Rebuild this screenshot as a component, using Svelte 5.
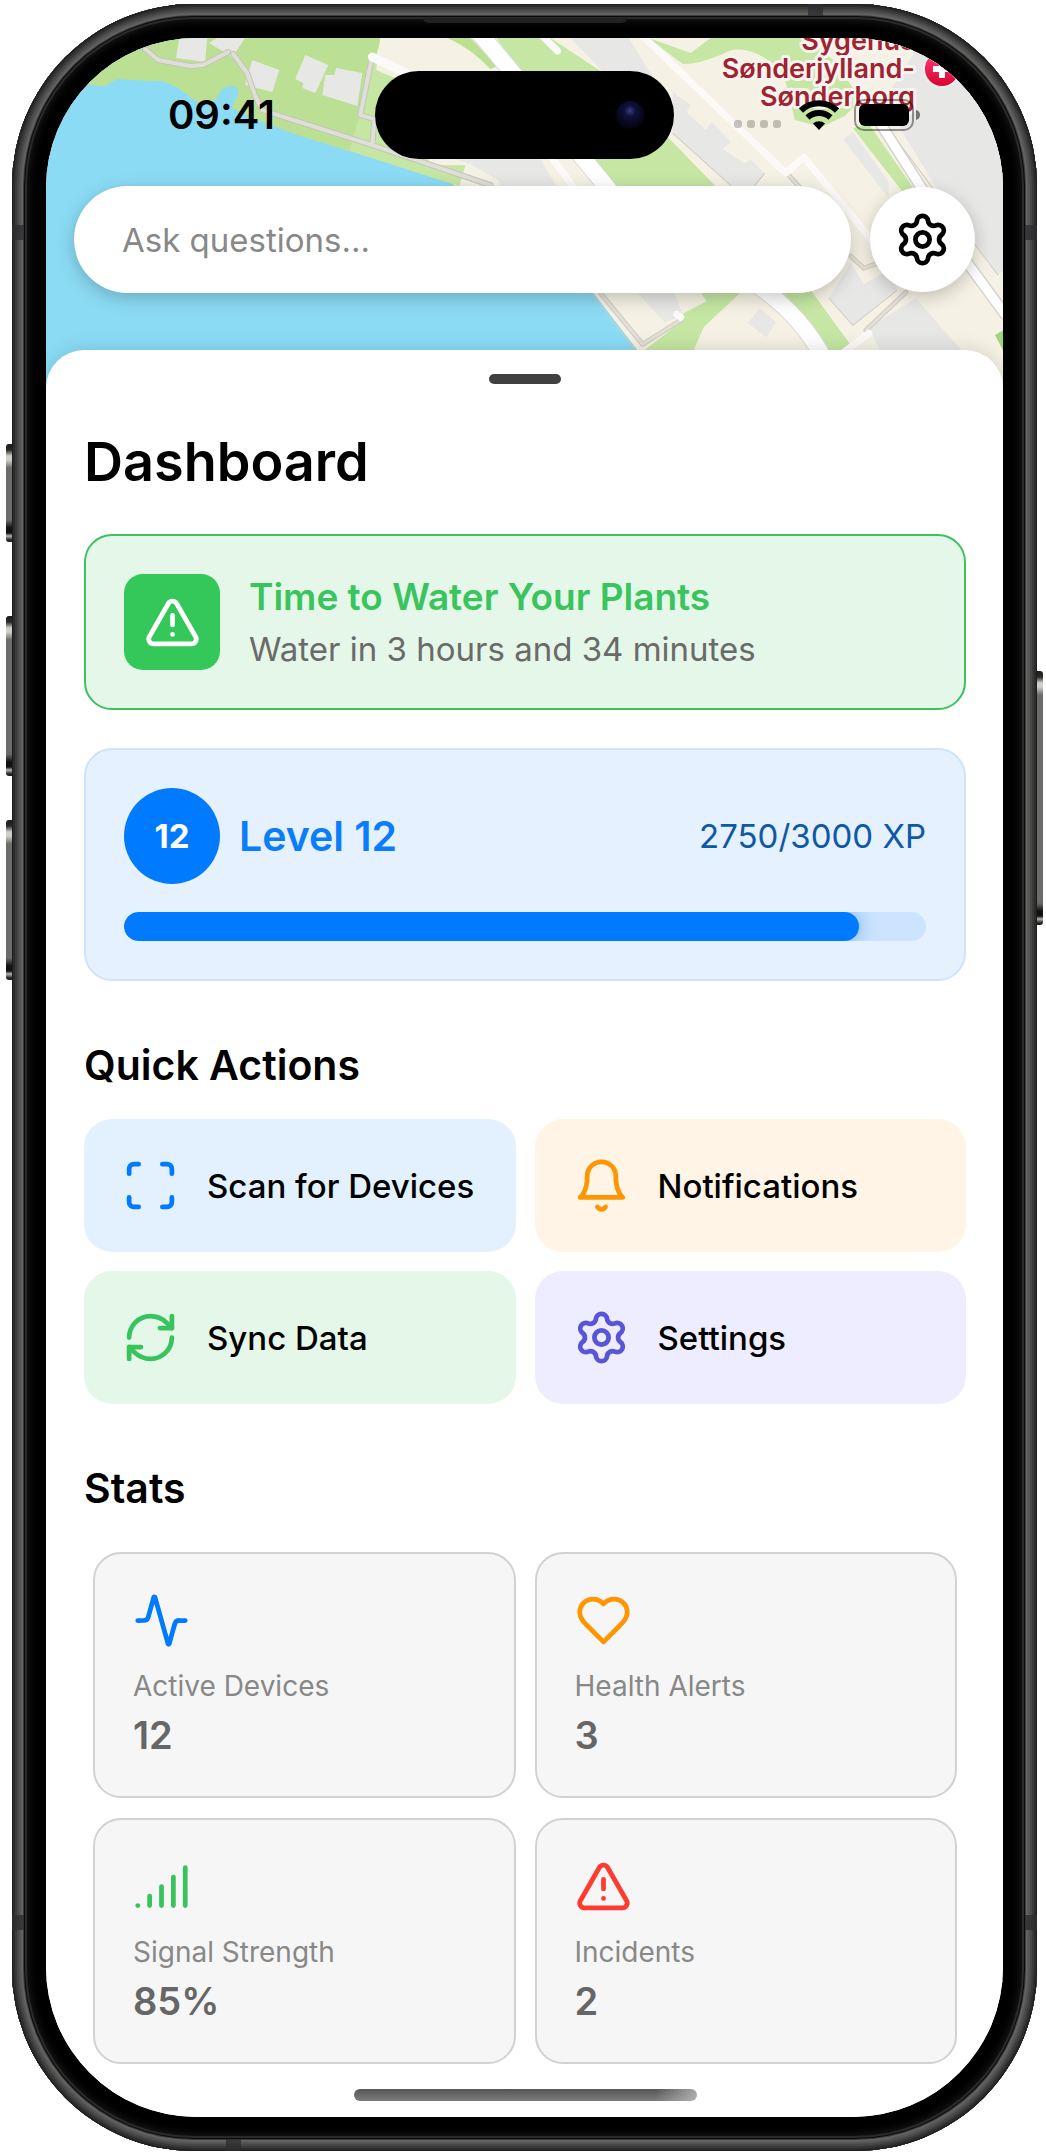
<script>
  const xp = 2750;
  const xpMax = 3000;

  const icons = {
    settings: [
      'M9.671 4.136a2.34 2.34 0 0 1 4.659 0 2.34 2.34 0 0 0 3.319 1.915 2.34 2.34 0 0 1 2.33 4.033 2.34 2.34 0 0 0 0 3.831 2.34 2.34 0 0 1-2.33 4.033 2.34 2.34 0 0 0-3.319 1.915 2.34 2.34 0 0 1-4.659 0 2.34 2.34 0 0 0-3.32-1.915 2.34 2.34 0 0 1-2.33-4.033 2.34 2.34 0 0 0 0-3.831A2.34 2.34 0 0 1 6.35 6.051a2.34 2.34 0 0 0 3.319-1.915',
      'M9 12a3 3 0 1 0 6 0a3 3 0 1 0-6 0'
    ],
    alert: [
      'm21.73 18-8-14a2 2 0 0 0-3.48 0l-8 14A2 2 0 0 0 4 21h16a2 2 0 0 0 1.73-3',
      'M12 9v4',
      'M12 17h.01'
    ],
    scan: [
      'M3 7V5a2 2 0 0 1 2-2h2',
      'M17 3h2a2 2 0 0 1 2 2v2',
      'M21 17v2a2 2 0 0 1-2 2h-2',
      'M7 21H5a2 2 0 0 1-2-2v-2'
    ],
    bell: [
      'M6 8a6 6 0 0 1 12 0c0 7 3 9 3 9H3s3-2 3-9',
      'M10.3 21a1.94 1.94 0 0 0 3.4 0'
    ],
    sync: [
      'M3 12a9 9 0 0 1 9-9 9.75 9.75 0 0 1 6.74 2.74L21 8',
      'M21 3v5h-5',
      'M21 12a9 9 0 0 1-9 9 9.75 9.75 0 0 1-6.74-2.74L3 16',
      'M8 16H3v5'
    ],
    activity: [
      'M22 12h-2.48a2 2 0 0 0-1.93 1.46l-2.35 8.36a.25.25 0 0 1-.48 0L9.24 2.18a.25.25 0 0 0-.48 0l-2.35 8.36A2 2 0 0 1 4.49 12H2'
    ],
    heart: [
      'M19 14c1.49-1.46 3-3.21 3-5.5A5.5 5.5 0 0 0 16.5 3c-1.76 0-3 .5-4.5 2-1.5-1.5-2.74-2-4.5-2A5.5 5.5 0 0 0 2 8.5c0 2.3 1.5 4.05 3 5.5l7 7Z'
    ],
    signal: ['M2 20h.01', 'M7 20v-4', 'M12 20v-8', 'M17 20V8', 'M22 4v16']
  };

  const actions = [
    { label: 'Scan for Devices', icon: 'scan', tone: 'blue' },
    { label: 'Notifications', icon: 'bell', tone: 'orange' },
    { label: 'Sync Data', icon: 'sync', tone: 'green' },
    { label: 'Settings', icon: 'settings', tone: 'purple' }
  ];

  const stats = [
    { label: 'Active Devices', value: '12', icon: 'activity', tone: 'blue' },
    { label: 'Health Alerts', value: '3', icon: 'heart', tone: 'orange' },
    { label: 'Signal Strength', value: '85%', icon: 'signal', tone: 'green' },
    { label: 'Incidents', value: '2', icon: 'alert', tone: 'red' }
  ];
</script>

{#snippet icon(name)}
  <svg class="icon" viewBox="0 0 24 24" aria-hidden="true">
    {#each icons[name] as d}
      <path {d} />
    {/each}
  </svg>
{/snippet}

<div class="page">
  <div class="phone">
    <span class="key key-action"></span>
    <span class="key key-up"></span>
    <span class="key key-down"></span>
    <span class="key key-power"></span>
    <span class="speaker"></span>
    <span class="band band-top"></span>
    <span class="band band-bottom"></span>
    <span class="band band-side band-left band-high"></span>
    <span class="band band-side band-right band-high"></span>
    <span class="band band-side band-left band-low"></span>
    <span class="band band-side band-right band-low"></span>

    <div class="screen">
      <svg class="map" viewBox="46 38 956 352" preserveAspectRatio="xMidYMin slice" aria-hidden="true">
        <defs>
          <linearGradient id="pin" x1="0" y1="0" x2="0" y2="1">
            <stop offset="0" stop-color="#ff3b76" />
            <stop offset="1" stop-color="#d8062f" />
          </linearGradient>
        </defs>
        <rect x="46" y="38" width="956" height="352" fill="#8bdbf5" />
        <path fill="#f5f1e4" d="M376 38H1002V390H668L593 293L455 186L376 120Z" />

        <!-- parks and shore -->
        <path fill="#c5e7a3" d="M376 38L376 70L400 80L430 165L465 165L459 186L340 148Z" />
        <path fill="#bbe094" d="M46 38H380V41L349 151L300 136L262 122L232 108L235 100Q240 92 237 88Q230 84 222 89Q216 98 213 104H200L190 97L178 88L162 81H150L117 79L105 86L88 85L46 78Z" />
        <path fill="#f5f1e4" d="M380 38H442L492 70L440 78H395L376 70Z" />
        <path fill="#bbe094" d="M447 38H470L497 66L490 69Q470 48 447 38Z" />
        <path fill="#c5e7a3" d="M496 38H550L606 75L668 138L715 186H613L540 100Z" />
        <path fill="#c5e7a3" d="M648 38L690 53L710 38H805L835 62L860 100L844 116L821 127L794 120L785 82L770 62Q742 42 722 54Q700 64 682 64Z" />
        <path fill="#c5e7a3" d="M852 128L868 124L914 190L902 192Z" />
        <path fill="#c5e7a3" d="M706 292H740L703 327L692 352H641L680 322L683 313L706 301L700 292Z" />
        <path fill="#c5e7a3" d="M780 290H810L850 345L842 352H823Q805 315 780 290Z" />
        <path fill="#9fd67c" d="M1002 330L994 335L1002 350Z" />

        <!-- buildings and paved areas -->
        <g fill="#e7e7e6">
          <path d="M179 38H207L205 62L176 58Z" />
          <path d="M217 38H245L232 57L209 43Z" />
          <path d="M252 60L279 70L272 92L245 85Z" />
          <path d="M305 55L328 65L315 93L302 88L303 83L295 79Z" />
          <path d="M325 75H334L336 68L362 73L357 106L322 95Z" />
          <path d="M455 159H540L556 186H500L498 180L470 164Z" />
          <path d="M570 38H628L644 64L652 76H606Z" />
          <path d="M672 92L690 105L686 112L705 130L711 122L730 142L722 149L744 163L750 159L764 173L752 188H733L672 133Z" />
          <path d="M842 139L852 132L888 182V198Z" />
          <path d="M900 130L890 90L915 50H1002V270L997 275L937 190Z" />
          <path d="M828 298L850 262L863 284L888 270L896 288L852 325Z" />
          <path d="M868 327L915 298L962 352H880Z" />
          <path d="M759 308L775 322L766 337L747 323Z" />
          <path d="M637 293H674L682 315L664 322Z" />
        </g>
        <g fill="none" stroke="#cfcdc6" stroke-width="1">
          <path d="M672 133L733 188M764 173L752 188" />
          <path d="M828 298L852 325L896 290M590 293L637 352" />
          <path d="M890 132L997 275" />
        </g>

        <!-- roads -->
        <g fill="none" stroke-linejoin="round" stroke-linecap="round">
          <g stroke="#c3c5b9" stroke-width="6">
            <path d="M145 49L158 60L190 66L203 65L228 52" />
            <path d="M233 54L247 73L255 96L262 110L372 145L490 185" />
            <path d="M371 60L360 115L374 119L372 145" />
          </g>
          <g stroke="#dfdfd7" stroke-width="4">
            <path d="M145 49L158 60L190 66L203 65L228 52" />
            <path d="M233 54L247 73L255 96L262 110L372 145L490 185" />
            <path d="M371 60L360 115L374 119L372 145" />
          </g>
          <g stroke="#cfccc3" stroke-width="5">
            <path d="M600 293L642 344L680 320" />
            <path d="M787 174L805 194M850 256L863 268L885 260" />
            <path d="M865 330L905 292" />
          </g>
          <g stroke="#e2dfd6" stroke-width="3">
            <path d="M600 293L642 344L680 320" />
            <path d="M787 174L805 194M850 256L863 268L885 260" />
            <path d="M865 330L905 292" />
          </g>
          <path stroke="#fbfaf8" stroke-width="9" d="M372 57L420 80" />
          <path stroke="#fbfaf8" stroke-width="7" d="M540 34L557 51" />
          <path stroke="#fbfaf8" stroke-width="7" d="M640 34L785 173L803 157L875 245" />
          <path stroke="#fbfaf8" stroke-width="7" d="M552 159Q565 175 575 190M680 317L676 314M843 352L868 333" />
          <g stroke="#dcdad4" stroke-width="18">
            <path d="M478 32L515 76" />
            <path d="M580 155L612 194" />
            <path d="M755 284Q800 314 824 360" />
          </g>
          <g stroke="#ffffff" stroke-width="16">
            <path d="M478 32L515 76" />
            <path d="M580 155L612 194" />
            <path d="M755 284Q800 314 824 360" />
          </g>
          <path stroke="#d6d4ce" stroke-width="12" d="M876 118L922 190M966 262L1004 314" />
          <path stroke="#ffffff" stroke-width="9" d="M876 118L922 190M966 262L1004 314" />
        </g>

        <g class="place">
          <text x="914" y="50">Sygehus</text>
          <text x="914" y="78">Sønderjylland-</text>
          <text x="914" y="106">Sønderborg</text>
        </g>
        <circle cx="941" cy="69" r="19" fill="#f7eef0" />
        <circle cx="941" cy="69" r="17" fill="url(#pin)" />
        <path d="M941 60V78M932 69H950" stroke="#ffffff" stroke-width="6" />
      </svg>

      <header class="status">
        <time class="clock" datetime="09:41">09:41</time>
        <div class="island"><span class="lens"></span></div>
        <div class="indicators">
          <span class="dots"><i></i><i></i><i></i><i></i></span>
          <svg class="wifi" viewBox="0 0 40 30" aria-hidden="true">
            <path d="M2 10.500a26 26 0 0 1 36 0" />
            <path d="M8.500 17.500a17 17 0 0 1 23 0" />
            <path class="wifi-dot" d="M20 30l-6-6.500a9 9 0 0 1 12 0z" />
          </svg>
          <svg class="battery" viewBox="0 0 66 32" aria-hidden="true">
            <rect class="shell" x="1" y="1" width="58" height="30" rx="9" />
            <rect x="5" y="5" width="50" height="22" rx="6" />
            <path class="nub" d="M62 11q4 1 4 5t-4 5z" />
          </svg>
        </div>
      </header>

      <div class="search-row">
        <input class="search" type="text" placeholder="Ask questions..." aria-label="Ask questions" />
        <button class="gear" type="button" aria-label="Settings">{@render icon('settings')}</button>
      </div>

      <main class="sheet">
        <div class="handle"></div>
        <h1>Dashboard</h1>

        <section class="card alert">
          <div class="alert-icon">{@render icon('alert')}</div>
          <div class="alert-text">
            <h2>Time to Water Your Plants</h2>
            <p>Water in 3 hours and 34 minutes</p>
          </div>
        </section>

        <section class="card level">
          <div class="level-head">
            <span class="badge">12</span>
            <h2>Level 12</h2>
            <span class="xp">{xp}/{xpMax} XP</span>
          </div>
          <div class="track" role="progressbar" aria-label="Experience" aria-valuenow={xp} aria-valuemin="0" aria-valuemax={xpMax}>
            <div class="fill" style="width: {(xp / xpMax) * 100}%"></div>
          </div>
        </section>

        <h2 class="heading">Quick Actions</h2>
        <div class="actions">
          {#each actions as a}
            <button class="action {a.tone}" type="button">
              {@render icon(a.icon)}
              <span>{a.label}</span>
            </button>
          {/each}
        </div>

        <h2 class="heading">Stats</h2>
        <div class="stats">
          {#each stats as s}
            <article class="stat {s.tone}">
              {@render icon(s.icon)}
              <p class="stat-label">{s.label}</p>
              <p class="stat-value">{s.value}</p>
            </article>
          {/each}
        </div>

        <div class="home"></div>
      </main>
    </div>
  </div>
</div>

<style>
  :global(body) {
    background: #ffffff;
  }

  .page {
    box-sizing: border-box;
    padding: 4px 9px 4px 12px;
    font-family: Inter, Roboto, 'Liberation Sans', sans-serif;
    color: #000000;
  }

  h1,
  h2,
  p {
    margin: 0;
  }

  button {
    border: 0;
    padding: 0;
    font: inherit;
    color: inherit;
    cursor: pointer;
  }

  .icon {
    display: block;
    flex: none;
    width: 57px;
    height: 57px;
    fill: none;
    stroke: currentColor;
    stroke-width: 2;
    stroke-linecap: round;
    stroke-linejoin: round;
  }

  /* device body */
  .phone {
    position: relative;
    padding: 34px;
    border-radius: 182px;
    background: #000000;
    box-shadow:
      inset 0 0 0 1px #1d1d1d,
      inset 0 0 0 3px #2c2c2c,
      inset 0 0 0 5px #3a3a3a,
      inset 0 0 0 7px #484848,
      inset 0 0 0 9px #555554,
      inset 0 0 0 11px #62625f,
      inset 0 0 0 12px #3c3c3c,
      inset 0 0 0 13px #0a0a0a,
      inset 0 0 0 15px #2a2a2a,
      inset 0 0 10px 16px #1c1c1c;
  }

  .key {
    position: absolute;
    left: -6px;
    width: 6px;
    border-radius: 3px 0 0 3px;
    background: linear-gradient(#1c1c1c 0, #2a2a2a 6px, #d0d0c8 12px, #d0d0c8 16px, #6b6b69 24px, #6b6b69 calc(100% - 22px), #111111 calc(100% - 14px), #111111 calc(100% - 9px), #b5b5b0 calc(100% - 6px), #222222 calc(100% - 2px));
  }

  .key-action {
    top: 440px;
    height: 98px;
  }

  .key-up {
    top: 612px;
    height: 160px;
  }

  .key-down {
    top: 816px;
    height: 160px;
  }

  .key-power {
    top: 667px;
    left: auto;
    right: -6px;
    height: 254px;
    border-radius: 0 3px 3px 0;
  }

  .speaker {
    position: absolute;
    top: 14px;
    left: 50%;
    width: 204px;
    height: 5px;
    margin-left: -102px;
    border-radius: 0 0 6px 6px;
    background: #222222;
  }

  .band {
    position: absolute;
    width: 15px;
    height: 12px;
    background: #2e2e31;
    opacity: 0.8;
  }

  .band-top {
    top: 0;
    right: 214px;
  }

  .band-bottom {
    bottom: 0;
    left: 214px;
  }

  .band-side {
    width: 12px;
    height: 15px;
  }

  .band-left {
    left: 0;
  }

  .band-right {
    right: 0;
  }

  .band-high {
    top: 221px;
  }

  .band-low {
    bottom: 221px;
  }

  .screen {
    position: relative;
    overflow: hidden;
    border-radius: 150px;
    background: #ffffff;
  }

  .map {
    position: absolute;
    top: 0;
    left: 0;
    width: 100%;
    height: 352px;
  }

  .place {
    font-size: 27px;
    font-weight: 600;
    text-anchor: end;
    fill: #9d2430;
    stroke: #f8f3ee;
    stroke-width: 6px;
    stroke-linejoin: round;
    paint-order: stroke;
  }

  /* status bar */
  .status {
    position: relative;
    display: grid;
    grid-template-columns: 1fr 299px 1fr;
    align-items: center;
    padding-top: 33px;
  }

  .clock {
    padding-left: 22px;
    text-align: center;
    font-size: 40px;
    line-height: 48px;
    font-weight: 600;
  }

  .island {
    display: flex;
    align-items: center;
    justify-content: flex-end;
    height: 88px;
    box-sizing: border-box;
    padding-right: 30px;
    border-radius: 44px;
    background: #000000;
  }

  .lens {
    width: 28px;
    height: 28px;
    border-radius: 50%;
    background: radial-gradient(circle at 50% 35%, #3a3f80 0, #10113c 24%, #090925 50%, #040410 75%, #000000 100%);
  }

  .indicators {
    display: flex;
    align-items: center;
    justify-content: center;
    padding-right: 24px;
  }

  .dots {
    display: flex;
    gap: 5px;
    align-self: flex-end;
    margin: 0 18px 3px 0;
  }

  .dots i {
    width: 8px;
    height: 8px;
    border-radius: 3px;
    background: rgba(0, 0, 0, 0.22);
  }

  .wifi {
    width: 40px;
    height: 30px;
    margin-right: 15px;
    fill: none;
    stroke: #000000;
    stroke-width: 6;
  }

  .wifi-dot {
    fill: #000000;
    stroke: none;
  }

  .battery {
    width: 66px;
    height: 32px;
  }

  .shell {
    fill: none;
    stroke: rgba(0, 0, 0, 0.4);
    stroke-width: 2;
  }

  .nub {
    fill: rgba(0, 0, 0, 0.5);
  }

  /* search */
  .search-row {
    position: relative;
    display: flex;
    align-items: center;
    gap: 19px;
    padding: 27px 28px 57px;
  }

  .search {
    flex: 1;
    min-width: 0;
    height: 107px;
    box-sizing: border-box;
    padding: 0 48px;
    border: 0;
    border-radius: 54px;
    background: #ffffff;
    box-shadow: 0 5px 18px rgba(0, 0, 0, 0.22);
    font-family: inherit;
    font-size: 33px;
    color: #000000;
  }

  .search::placeholder {
    color: #888888;
    opacity: 1;
  }

  .gear {
    display: grid;
    place-items: center;
    flex: none;
    width: 105px;
    height: 105px;
    border-radius: 50%;
    background: #ffffff;
    box-shadow: 0 5px 18px rgba(0, 0, 0, 0.22);
  }

  /* sheet */
  .sheet {
    position: relative;
    padding: 24px 37px 16px 38px;
    border-radius: 38px 38px 0 0;
    background: #ffffff;
    box-shadow: 0 -2px 18px rgba(0, 0, 0, 0.12);
  }

  .handle {
    width: 72px;
    height: 10px;
    margin: 0 auto;
    border-radius: 5px;
    background: #404040;
  }

  h1 {
    margin: 44px 0 38px;
    font-size: 54px;
    line-height: 68px;
    font-weight: 600;
  }

  .card {
    padding: 38px;
    border: 2px solid;
    border-radius: 28px;
  }

  .alert {
    display: flex;
    align-items: center;
    gap: 29px;
    margin-bottom: 38px;
    border-color: #3fc061;
    background: #e5f7e9;
  }

  .alert-icon {
    display: grid;
    place-items: center;
    flex: none;
    width: 96px;
    height: 96px;
    border-radius: 19px;
    background: #34c759;
    color: #ffffff;
  }

  .alert-text {
    display: grid;
    gap: 10px;
  }

  .alert h2 {
    font-size: 37px;
    line-height: 44px;
    font-weight: 600;
    color: #3ac45e;
  }

  .alert p {
    font-size: 33px;
    line-height: 40px;
    color: #6a6a6a;
  }

  .level {
    border-color: #cfe3fa;
    background: #e5f1ff;
  }

  .level-head {
    display: flex;
    align-items: center;
    gap: 19px;
    margin-bottom: 28px;
  }

  .badge {
    display: grid;
    place-items: center;
    flex: none;
    width: 96px;
    height: 96px;
    border-radius: 50%;
    background: #007aff;
    color: #ffffff;
    font-size: 33px;
    font-weight: 700;
  }

  .level h2 {
    flex: 1;
    font-size: 41px;
    line-height: 52px;
    font-weight: 600;
    color: #0a7dfb;
  }

  .xp {
    font-size: 33px;
    line-height: 40px;
    color: #0e58a8;
  }

  .track {
    overflow: hidden;
    height: 29px;
    border-radius: 15px;
    background: #cce4ff;
  }

  .fill {
    height: 100%;
    border-radius: 15px;
    background: #007aff;
    box-shadow: 0 0 19px rgba(0, 122, 255, 0.5);
  }

  .heading {
    margin: 58px 0 28px;
    font-size: 41px;
    line-height: 52px;
    font-weight: 600;
  }

  .actions {
    display: grid;
    grid-template-columns: 1fr 1fr;
    gap: 19px;
  }

  .action {
    display: flex;
    align-items: center;
    gap: 28px;
    padding: 38px;
    border-radius: 28px;
    font-size: 33px;
    line-height: 40px;
    font-weight: 500;
    text-align: left;
    white-space: nowrap;
  }

  .action span {
    color: #000000;
  }

  .blue {
    color: #007aff;
  }

  .orange {
    color: #ff9500;
  }

  .green {
    color: #38c45d;
  }

  .purple {
    color: #5856d6;
  }

  .red {
    color: #ff3b30;
  }

  .action.blue {
    background: #e3f1ff;
  }

  .action.orange {
    background: #fff4e5;
  }

  .action.green {
    background: #e5f7e9;
  }

  .action.purple {
    background: #eeedff;
  }

  .stats {
    display: grid;
    grid-template-columns: 1fr 1fr;
    gap: 20px 19px;
    padding: 10px 9px 0;
  }

  .stat {
    padding: 38px;
    border: 2px solid #d2d2d2;
    border-radius: 28px;
    background: #f6f6f6;
  }

  .stat-label {
    margin-top: 19px;
    font-size: 28px;
    line-height: 36px;
    color: #888888;
  }

  .stat-value {
    margin-top: 8px;
    font-size: 38px;
    line-height: 46px;
    font-weight: 600;
    color: #666666;
  }

  .home {
    width: 343px;
    height: 12px;
    margin: 25px auto 0;
    border-radius: 6px;
    background:
      linear-gradient(90deg, rgba(200, 200, 200, 0) 88%, rgba(200, 200, 200, 0.7) 100%),
      linear-gradient(#555555, #7d7d7d);
  }
</style>
